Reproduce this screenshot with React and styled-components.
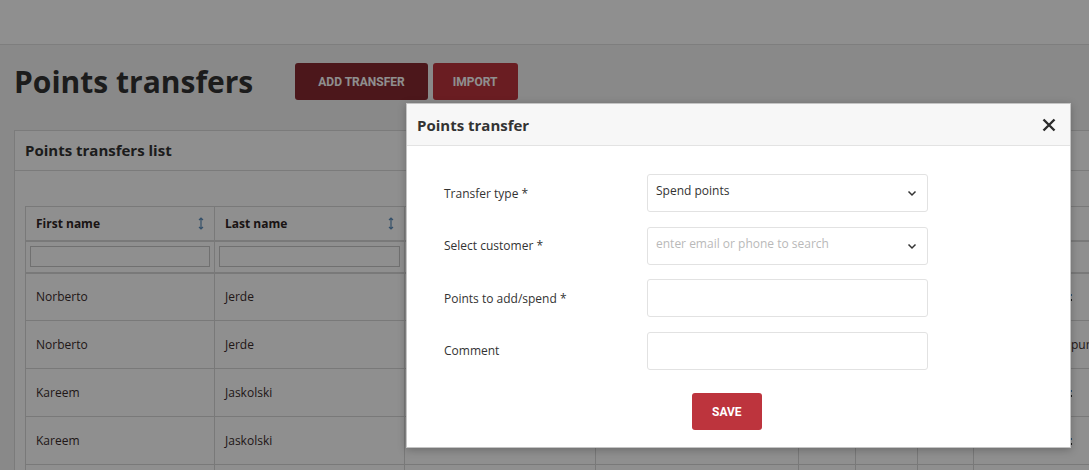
import styled, { createGlobalStyle } from 'styled-components'

const GlobalStyle = createGlobalStyle`
  html, body {
    margin: 0;
    padding: 0;
  }
  body {
    font-family: 'Open Sans', 'Liberation Sans', sans-serif;
    color: #333;
    background: #f5f5f5;
  }
  * {
    box-sizing: border-box;
  }
`

const Page = styled.div`
  position: relative;
  width: 1089px;
  height: 470px;
  overflow: hidden;
  background: #f5f5f5;
`
const TopBar = styled.header`
  height: 45px;
  background: #fff;
  border-bottom: 1px solid #e0e0e0;
`
const TitleRow = styled.div`
  display: flex;
  align-items: center;
  padding: 18px 0 0 14px;
`
const Title = styled.h1`
  margin: 0;
  font-size: 30px;
  line-height: 37px;
  font-weight: 700;
  color: #333;
`
const Actions = styled.div`
  display: flex;
  gap: 5px;
  margin-left: 42px;
`
const Button = styled.button`
  height: 37px;
  padding: 0 ${(p) => p.$pad || 19}px;
  border: none;
  border-radius: 3px;
  background: ${(p) => (p.$dark ? '#882a31' : '#bd343d')};
  color: #fff;
  font-family: Roboto, 'Liberation Sans', sans-serif;
  font-weight: 700;
  font-size: 12px;
  text-transform: uppercase;
  cursor: pointer;
`
const Card = styled.section`
  width: 1100px;
  margin: 30px 0 0 14px;
  background: #fff;
  border: 1px solid #dcdcdc;
`
const CardHeader = styled.div`
  height: 40px;
  padding: 0 10px;
  border-bottom: 1px solid #dcdcdc;
  font-size: 15px;
  font-weight: 700;
  line-height: 39px;
`
const CardBody = styled.div`
  padding: 35px 0 0 10px;
`
const Table = styled.table`
  border-collapse: collapse;
  table-layout: fixed;
  width: 1110px;
  font-size: 12px;
`
const Th = styled.th`
  height: 34px;
  padding: 0 10px;
  border: 1px solid #d8d8d8;
  border-bottom-width: 2px;
  text-align: left;
  font-weight: 700;
  color: #2f2525;
`
const ThInner = styled.div`
  display: flex;
  align-items: center;
  justify-content: space-between;
`
const FilterCell = styled.td`
  height: 32px;
  padding: 0 4px;
  border: 1px solid #d8d8d8;
  border-bottom-width: 2px;
`
const FilterInput = styled.input`
  display: block;
  width: 100%;
  height: 21px;
  border: 1px solid #c8c8c8;
  background: #fff;
`
const Td = styled.td`
  height: 48px;
  padding: 0 10px;
  border: 1px solid #d8d8d8;
  color: #3a2c2c;
  white-space: nowrap;
  overflow: hidden;
`
const NoteCell = styled(Td)`
  padding-left: 97px;
`
const Dots = styled.span`
  display: inline-block;
  width: 1px;
  height: 8px;
  background: linear-gradient(#4a8fc8 0 2px, transparent 2px 5px, #333 5px 7px, transparent 7px);
  vertical-align: middle;
`
const Overlay = styled.div`
  position: absolute;
  inset: 0;
  background: rgba(0, 0, 0, 0.44);
`
const Modal = styled.div`
  position: absolute;
  left: 406px;
  top: 103px;
  width: 665px;
  height: 345px;
  background: #fff;
  border: 1px solid #c4c4c4;
  box-shadow: 0 2px 8px rgba(0, 0, 0, 0.25);
`
const ModalHeader = styled.div`
  display: flex;
  align-items: center;
  justify-content: space-between;
  height: 42px;
  padding: 0 14px 0 10px;
  background: #f7f7f7;
  border-bottom: 1px solid #e3e3e3;
`
const ModalTitle = styled.h4`
  margin: 0;
  font-size: 15px;
  font-weight: 700;
  color: #333;
`
const CloseButton = styled.button`
  display: flex;
  padding: 0;
  border: none;
  background: none;
  cursor: pointer;
`
const ModalBody = styled.div`
  padding: 28px 0 0 37px;
`
const FormRow = styled.div`
  display: flex;
  align-items: center;
  margin-bottom: 14.5px;
`
const Label = styled.label`
  width: 203px;
  font-size: 12px;
  color: #333;
`
const Field = styled.div`
  display: flex;
  justify-content: space-between;
  width: 281px;
  height: 38px;
  padding: 7px 10px 0 8px;
  border: 1px solid #e2e2e2;
  border-radius: 3px;
  background: #fff;
  font-size: 12px;
  line-height: 18px;
  color: ${(p) => (p.$placeholder ? '#b9b9b9' : '#333')};
`
const Chevron = styled.svg`
  margin-top: 8px;
`
const SaveRow = styled.div`
  padding: 9px 0 0 248px;
`

const SortIcon = () => (
  <svg width='6' height='13' viewBox='0 0 6 13'>
    <path d='M3 1v11M1 3l2-2 2 2M1 10l2 2 2-2' fill='none' stroke='#5d8fbd' strokeWidth='1.2' />
  </svg>
)

const Select = ({ value, placeholder }) => (
  <Field $placeholder={!value}>
    <span>{value || placeholder}</span>
    <Chevron width='10' height='7' viewBox='0 0 10 7'>
      <path d='M1.5 1.5l3.5 3.5 3.5-3.5' fill='none' stroke='#333' strokeWidth='1.5' />
    </Chevron>
  </Field>
)

const rows = [
  { first: 'Norberto', last: 'Jerde', note: 'dots' },
  { first: 'Norberto', last: 'Jerde', note: 'purchase' },
  { first: 'Kareem', last: 'Jaskolski', note: 'dots' },
  { first: 'Kareem', last: 'Jaskolski', note: 'dots' },
  { first: '', last: '', note: '' },
]

const widths = [189, 190, 191, 203, 57, 62, 56, 162]

const App = () => {
  return (
    <>
      <GlobalStyle />
      <Page>
        <TopBar />
        <TitleRow>
          <Title>Points transfers</Title>
          <Actions>
            <Button $dark $pad={23}>Add transfer</Button>
            <Button $pad={20}>Import</Button>
          </Actions>
        </TitleRow>
        <Card>
          <CardHeader>Points transfers list</CardHeader>
          <CardBody>
            <Table>
              <colgroup>
                {widths.map((w, i) => (
                  <col key={i} style={{ width: w }} />
                ))}
              </colgroup>
              <thead>
                <tr>
                  <Th>
                    <ThInner>
                      First name <SortIcon />
                    </ThInner>
                  </Th>
                  <Th>
                    <ThInner>
                      Last name <SortIcon />
                    </ThInner>
                  </Th>
                  <Th />
                  <Th />
                  <Th />
                  <Th />
                  <Th />
                  <Th />
                </tr>
                <tr>
                  <FilterCell><FilterInput /></FilterCell>
                  <FilterCell><FilterInput /></FilterCell>
                  <FilterCell />
                  <FilterCell />
                  <FilterCell />
                  <FilterCell />
                  <FilterCell />
                  <FilterCell />
                </tr>
              </thead>
              <tbody>
                {rows.map((r, i) => (
                  <tr key={i}>
                    <Td>{r.first}</Td>
                    <Td>{r.last}</Td>
                    <Td />
                    <Td />
                    <Td />
                    <Td />
                    <Td />
                    <NoteCell>{r.note === 'dots' ? <Dots /> : r.note}</NoteCell>
                  </tr>
                ))}
              </tbody>
            </Table>
          </CardBody>
        </Card>
        <Overlay />
        <Modal>
          <ModalHeader>
            <ModalTitle>Points transfer</ModalTitle>
            <CloseButton>
              <svg width='14' height='14' viewBox='0 0 14 14'>
                <path d='M1.5 1.5l11 11M12.5 1.5l-11 11' stroke='#2b2b2b' strokeWidth='2.4' />
              </svg>
            </CloseButton>
          </ModalHeader>
          <ModalBody>
            <FormRow>
              <Label>Transfer type *</Label>
              <Select value='Spend points' />
            </FormRow>
            <FormRow>
              <Label>Select customer *</Label>
              <Select placeholder='enter email or phone to search' />
            </FormRow>
            <FormRow>
              <Label>Points to add/spend *</Label>
              <Field />
            </FormRow>
            <FormRow>
              <Label>Comment</Label>
              <Field />
            </FormRow>
            <SaveRow>
              <Button $pad={20}>Save</Button>
            </SaveRow>
          </ModalBody>
        </Modal>
      </Page>
    </>
  )
}

export default App
